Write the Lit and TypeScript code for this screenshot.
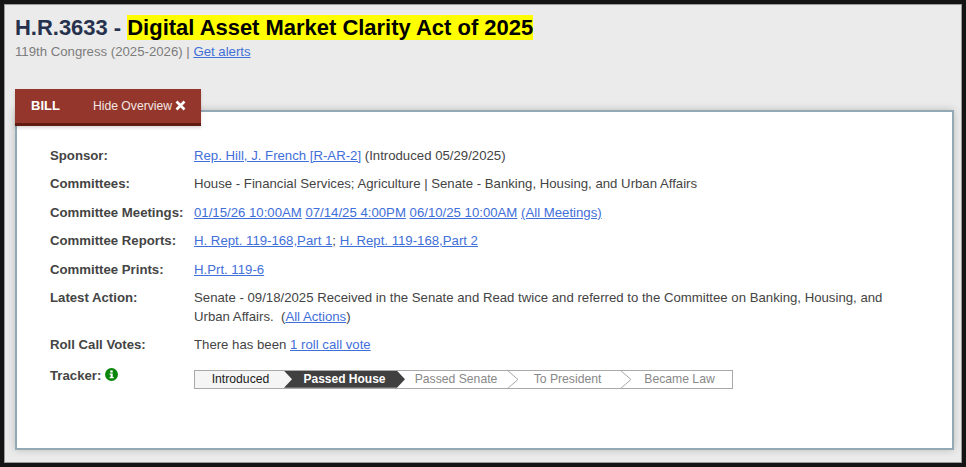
import { LitElement, html, css, svg } from 'lit';
import { customElement } from 'lit/decorators.js';

const chevron = svg`<polyline points="0,0 11,9.5 0,19" fill="none" stroke="#a9a9a9" stroke-width="1"></polyline>`;

@customElement('app-root')
export class AppRoot extends LitElement {
  static styles = css`
    :host {
      display: block;
      width: 966px;
      height: 467px;
      box-sizing: border-box;
      padding: 4px;
      background: #141414;
      font-family: 'Liberation Sans', Arial, sans-serif;
      font-size: 13.2px;
      color: #444;
    }
    .frame {
      box-sizing: border-box;
      height: 459px;
      background: #ebebeb;
      border: 1px solid #9b9b9b;
      padding: 9px 10px 0 10px;
    }
    h1 {
      margin: 0;
      font-size: 21.96px;
      line-height: 28px;
      font-weight: bold;
      color: #26324d;
    }
    mark {
      background: #ffff00;
      color: #000;
    }
    .congress {
      margin-top: 1px;
      line-height: 18px;
      color: #7c7c7c;
    }
    a {
      color: #3f6fd8;
      text-decoration: underline;
    }
    .tab {
      position: relative;
      z-index: 1;
      box-sizing: border-box;
      display: flex;
      align-items: center;
      width: 186px;
      height: 37px;
      margin-top: 28px;
      padding: 0 0 1px 16px;
      background: #94362b;
      border-bottom: 3px solid #5f1a12;
      box-shadow: 0 2px 3px rgba(0, 0, 0, 0.15);
      color: #fff;
    }
    .tab b {
      font-size: 13px;
      margin-right: 33px;
    }
    .tab span {
      font-size: 12.2px;
      color: #f2e6e3;
    }
    .tab svg {
      margin-left: 3px;
    }
    .panel {
      box-sizing: border-box;
      width: 939px;
      height: 340px;
      margin-top: -16px;
      padding: 34px 33px 0 33px;
      background: #fff;
      border: 2px solid #93aab6;
      box-shadow: 0 0 8px rgba(0, 0, 0, 0.2);
    }
    .rows {
      display: grid;
      grid-template-columns: 144px 1fr;
      row-gap: 9.4px;
      line-height: 19px;
    }
    .label {
      font-weight: bold;
    }
    .label svg {
      vertical-align: -1px;
    }
    .line {
      display: block;
    }
    .tracker-label {
      padding-top: 2.6px;
    }
    .tracker {
      display: flex;
      box-sizing: border-box;
      width: 539px;
      height: 19px;
      margin-top: 6px;
      border: 1px solid #a9a9a9;
      font-size: 12.2px;
      line-height: 17px;
      color: #888;
    }
    .step {
      position: relative;
      text-align: center;
    }
    .step svg {
      position: absolute;
      top: -1px;
      right: -11px;
      z-index: 1;
      overflow: visible;
    }
    .done {
      width: 97px;
      margin-right: -8px;
      padding-right: 6px;
      box-sizing: border-box;
      background: #f5f5f5;
      color: #222;
    }
    .current {
      width: 121px;
      background: #404040;
      color: #fff;
      font-size: 12px;
      font-weight: bold;
      clip-path: polygon(0 0, 113px 0, 100% 50%, 113px 100%, 0 100%, 8px 50%);
    }
    .senate {
      width: 102px;
    }
    .president {
      width: 113px;
      padding-left: 8px;
      box-sizing: border-box;
    }
    .law {
      flex: 1;
      padding-left: 7px;
    }
  `;

  render() {
    return html`
      <div class="frame">
        <h1>H.R.3633 - <mark>Digital Asset Market Clarity Act of 2025</mark></h1>
        <div class="congress">119th Congress (2025-2026) | <a href="#">Get alerts</a></div>
        <div class="tab">
          <b>BILL</b>
          <span>Hide Overview</span>
          <svg width="11" height="11" viewBox="0 0 11 11">
            <path d="M1.5 1.5l8 8M9.5 1.5l-8 8" stroke="#fff" stroke-width="2.6" fill="none"></path>
          </svg>
        </div>
        <div class="panel">
          <div class="rows">
            <div class="label">Sponsor:</div>
            <div><a href="#">Rep. Hill, J. French [R-AR-2]</a> (Introduced 05/29/2025)</div>
            <div class="label">Committees:</div>
            <div>House - Financial Services; Agriculture | Senate - Banking, Housing, and Urban Affairs</div>
            <div class="label">Committee Meetings:</div>
            <div>
              <a href="#">01/15/26 10:00AM</a> <a href="#">07/14/25 4:00PM</a>
              <a href="#">06/10/25 10:00AM</a> <a href="#">(All Meetings)</a>
            </div>
            <div class="label">Committee Reports:</div>
            <div><a href="#">H. Rept. 119-168,Part 1</a>; <a href="#">H. Rept. 119-168,Part 2</a></div>
            <div class="label">Committee Prints:</div>
            <div><a href="#">H.Prt. 119-6</a></div>
            <div class="label">Latest Action:</div>
            <div>
              <span class="line">Senate - 09/18/2025 Received in the Senate and Read twice and referred to the Committee on Banking, Housing, and</span>
              <span class="line">Urban Affairs.&nbsp; (<a href="#">All Actions</a>)</span>
            </div>
            <div class="label">Roll Call Votes:</div>
            <div>There has been <a href="#">1 roll call vote</a></div>
            <div class="label tracker-label">
              Tracker:
              <svg width="13" height="13" viewBox="0 0 13 13">
                <circle cx="6.5" cy="6.5" r="6.5" fill="#0a870a"></circle>
                <rect x="5.3" y="2.4" width="2.4" height="2.2" fill="#fff"></rect>
                <path d="M4.6 5.5h3.1v3.6h1v1.2H4.6V9.1h1V6.7h-1z" fill="#fff"></path>
              </svg>
            </div>
            <div class="tracker">
              <div class="step done">Introduced</div>
              <div class="step current">Passed House</div>
              <div class="step senate">
                Passed Senate<svg width="11" height="19">${chevron}</svg>
              </div>
              <div class="step president">
                To President<svg width="11" height="19">${chevron}</svg>
              </div>
              <div class="step law">Became Law</div>
            </div>
          </div>
        </div>
      </div>
    `;
  }
}

declare global {
  interface HTMLElementTagNameMap {
    'app-root': AppRoot;
  }
}
